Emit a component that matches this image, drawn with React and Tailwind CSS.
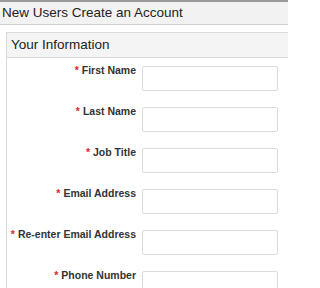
const fields = [
  "First Name",
  "Last Name",
  "Job Title",
  "Email Address",
  "Re-enter Email Address",
  "Phone Number",
];

const FieldRow = ({ label }) => (
  <div className="flex items-start gap-[6px]">
    <label className="w-[129px] shrink-0 -mt-[2px] whitespace-nowrap text-right text-[10.5px] font-bold leading-[13px] text-[#333]">
      <span className="text-[#d9262c] mr-[3px]">*</span>
      {label}
    </label>
    <input
      type="text"
      className="w-[136px] h-[25px] border border-[#dcdcdc] rounded-[2px] bg-white outline-none"
    />
  </div>
);

export default function App() {
  return (
    <div
      className="w-[288px] h-[288px] overflow-hidden bg-white text-[#222]"
      style={{ fontFamily: '"Liberation Sans", Arial, sans-serif' }}
    >
      {/* page title bar */}
      <div className="h-[25px] border-t-2 border-[#9a9a9a] border-b border-b-[#cfcfcf] bg-[#f2f2f2] pl-[2px] text-[13.5px] leading-[21px]">
        New Users Create an Account
      </div>

      {/* panel */}
      <div className="ml-[6px] mt-[7px] w-[300px] h-[300px] border-l border-t border-[#dadada]">
        <div className="h-[25px] bg-[#f4f4f4] border-b border-[#d8d8d8] pl-[4px] text-[13.5px] leading-[24px]">
          Your Information
        </div>
        <div className="flex flex-col gap-[16px] pt-[8px]">
          {fields.map((f) => (
            <FieldRow key={f} label={f} />
          ))}
        </div>
      </div>
    </div>
  );
}
